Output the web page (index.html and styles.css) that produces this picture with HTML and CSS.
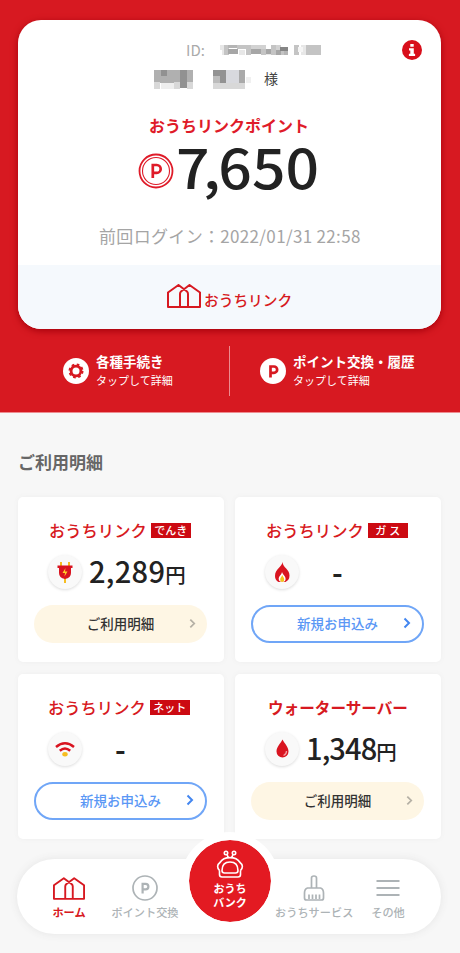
FILE: index.html
```html
<!DOCTYPE html>
<html lang="ja">
<head>
<meta charset="utf-8">
<title>おうちリンク</title>
<link rel="stylesheet" href="styles.css">
</head>
<body>
<svg class="defs" width="0" height="0">
  <symbol id="house" viewBox="0 0 34 24"><g fill="none" stroke="currentColor" stroke-width="2" stroke-linejoin="round"><path d="M1 23V8.500L11.500 1 20 7.500Q21 8.500 21 10V23ZM33 23V8.500L22.500 1 14 7.500Q13 8.500 13 10V23Z"/></g></symbol>
  <symbol id="chevron" viewBox="0 0 8 12"><path d="M1.500 1.500 6 6 1.500 10.500" fill="none" stroke="currentColor" stroke-width="2"/></symbol>
</svg>
<header class="hero">
  <section class="member">
    <div class="member-id"><span>ID:</span>
      <svg width="104" height="12" viewBox="0 0 104 12" shape-rendering="crispEdges">
        <path fill="#e7e7e7" d="M1 1h4v5H1zM3 6h3v5H3zM20 6h6v5h-6zM47 6h5v5h-5zM82 1h5v10h-5z"/>
        <path fill="#c4c4c4" d="M5 1h5v10H5zM18 1h9v4h-9zM27 1h5v10h-5zM42 5h5v6h-5zM52 1h5v10h-5zM61 6h5v5h-5zM75 1h5v10h-5zM87 1h15v10H87z"/>
        <path fill="#a6a6a6" d="M9 5h10v5H9zM32 5h10v5H32zM47 5h5v5h-5zM57 6h5v5h-5z"/>
        <path fill="#d2d2d2" d="M32 1h10v4H32zM42 1h5v4h-5zM57 1h5v5h-5z"/>
        <path fill="#858585" d="M61 3h8v4h-8z"/><path fill="#b5b5b5" d="M65 7h4v4h-4zM9 1h9v3H9z"/><path fill="#f5f5f5" d="M79 3h5v5h-5z"/>
      </svg>
    </div>
    <div class="member-name">
      <svg width="100" height="20" viewBox="0 0 100 20" shape-rendering="crispEdges">
        <path fill="#b0b0b0" d="M1 1h39v13H1z"/><path fill="#919191" d="M8 1h6v6H8zM27 1h7v18h-7z"/><path fill="#eee" d="M8 14h13v6H8z"/><path fill="#d8d8d8" d="M1 13h6v7H1zM21 13h6v7h-6zM34 13h6v7h-6z"/>
        <path fill="#929292" d="M60 1h13v13H60z"/><path fill="#bcbcbc" d="M60 7h7v7h-7z"/><path fill="#d8d9de" d="M73 1h13v13H73z"/><path fill="#aaa" d="M86 1h6v13h-6z"/><path fill="#d8d8d8" d="M60 14h32v6H60z"/><path fill="#f0f0f0" d="M93 8h5v6h-5z"/>
      </svg><span>様</span>
    </div>
    <button class="info" aria-label="情報"><svg width="20" height="20" viewBox="0 0 20 20"><circle cx="10" cy="10" r="10" fill="#d80f1b"/><path d="M8.300 4h3.400v2.800H8.300zM7 8.200h4.800v5.600h1.300V16H6.900v-2.200h1.400v-3.400H7z" fill="#fff"/></svg></button>
    <h1 class="point-title">おうちリンクポイント</h1>
    <div class="points">
      <svg width="36" height="36" viewBox="0 0 36 36" fill="none" stroke="#df1b29"><circle cx="18" cy="18" r="16.500" stroke-width="1.800"/><circle cx="18" cy="18" r="13.500" stroke-width="1.100"/><path d="M14.800 25V12h4a3.900 3.900 0 0 1 0 7.800h-4" stroke-width="2.700"/></svg>
      <strong>7<span>,</span>650</strong>
    </div>
    <p class="last-login">前回ログイン：2022/01/31 22:58</p>
    <footer class="member-brand"><svg width="34" height="24"><use href="#house" width="34" height="24"/></svg><span>おうちリンク</span></footer>
  </section>
  <nav class="actions">
    <a class="action"><svg width="26" height="26" viewBox="0 0 26 26"><circle cx="13" cy="13" r="13" fill="#fff"/><circle cx="13" cy="13" r="6.300" fill="#d71921"/><circle cx="13" cy="13" r="6.500" fill="none" stroke="#d71921" stroke-width="2" stroke-dasharray="2.600 2.505"/><circle cx="13" cy="13" r="3.500" fill="#fff"/></svg><span><b>各種手続き</b><small>タップして詳細</small></span></a>
    <a class="action action-exchange"><svg width="26" height="26" viewBox="0 0 26 26"><circle cx="13" cy="13" r="13" fill="#fff"/><path d="M10.500 19.500V8.500h3.500a3.100 3.100 0 0 1 0 6.300h-3.500" fill="none" stroke="#d71921" stroke-width="2.700"/></svg><span><b>ポイント交換・履歴</b><small>タップして詳細</small></span></a>
  </nav>
</header>
<main>
  <h2>ご利用明細</h2>
  <div class="cards">
    <article class="card">
      <h3><span class="brand">おうちリンク</span><em>でんき</em></h3>
      <div class="amount"><i><svg width="20" height="24" viewBox="0 0 20 24"><path d="M6 2v5M14 2v5M10 17v6" stroke="#f6bd20" stroke-width="2"/><path d="M2.500 5.500h15v2.500H16v5q0 5-6 6-6-1-6-6V8H2.500z" fill="#d91420"/><path d="M10.500 8 7.500 13H10l-.5 3.500 3-5H10z" fill="#ffd02a"/></svg></i><strong>2,289<small>円</small></strong></div>
      <a class="button">ご利用明細<svg width="7" height="11"><use href="#chevron" width="7" height="11"/></svg></a>
    </article>
    <article class="card">
      <h3><span class="brand">おうちリンク</span><em class="wide">ガス</em></h3>
      <div class="amount"><i><svg width="20" height="24" viewBox="0 0 20 24"><path d="M10.500 2C10 7 3 9 3 16q0 4 3.500 6h7q4-2 4-6.500C17.500 9 11 8 10.500 2z" fill="#d91420"/><path d="M10 12c1 3 3.600 4 3.600 7 0 2-1.200 3-3.300 3s-3.600-1-3.600-3c0-3 2.800-4 3.300-7z" fill="#fff"/><path d="M10.200 15c.8 1.700 2 2.600 2 4.300S11.500 22 10.200 22s-2-1-2-2.700 1.500-2.600 2-4.300z" fill="#f3c51b"/></svg></i><strong class="none">-</strong></div>
      <a class="button apply">新規お申込み<svg width="8" height="12"><use href="#chevron" width="8" height="12"/></svg></a>
    </article>
    <article class="card">
      <h3 class="net"><span class="brand">おうちリンク</span><em>ネット</em></h3>
      <div class="amount"><i><svg width="22" height="24" viewBox="0 0 22 24"><path d="M2 10q9-7.500 18 0M5.800 13.700q5.200-4.500 10.400 0" fill="none" stroke="#d91420" stroke-width="2.500"/><ellipse cx="11" cy="17.300" rx="2.700" ry="2.200" fill="#f6bd20"/></svg></i><strong class="none">-</strong></div>
      <a class="button apply">新規お申込み<svg width="8" height="12"><use href="#chevron" width="8" height="12"/></svg></a>
    </article>
    <article class="card">
      <h3 class="water">ウォーターサーバー</h3>
      <div class="amount water-amount"><i><svg width="20" height="24" viewBox="0 0 20 24"><path d="M10.500 2.500C8.500 6.500 4.500 10 4.500 14.500a6 6 0 0 0 12 0C16.500 10 12.500 6.500 10.500 2.500z" fill="#d91420"/><path d="M14.500 14q.2 3-3 4.500" fill="none" stroke="#f49ba0" stroke-width="1.300"/></svg></i><strong>1,348<small>円</small></strong></div>
      <a class="button">ご利用明細<svg width="7" height="11"><use href="#chevron" width="7" height="11"/></svg></a>
    </article>
  </div>
</main>
<nav class="tabs">
  <a class="tab current"><svg width="32" height="23"><use href="#house" width="32" height="23"/></svg><span>ホーム</span></a>
  <a class="tab"><svg width="26" height="26" viewBox="0 0 26 26" fill="none" stroke="currentColor"><circle cx="13" cy="13" r="12" stroke-width="1.700"/><path d="M10.600 18.500V8.800h3a2.800 2.800 0 0 1 0 5.600h-3" stroke-width="2.200"/></svg><span>ポイント交換</span></a>
  <div class="gap"></div>
  <a class="tab"><svg width="22" height="26" viewBox="0 0 22 26" fill="none" stroke="currentColor" stroke-width="1.700"><path d="M8.500 13V3q0-2 2.500-2t2.500 2v10M4.500 13h13q3 1 3 5v5q0 2-2 2h-15q-2 0-2-2v-5q0-4 3-5zM6 24v-4.500M9.500 24v-4.500M13 24v-4.500M16.500 24v-4.500"/></svg><span>おうちサービス</span></a>
  <a class="tab"><svg width="24" height="18" viewBox="0 0 24 18" stroke="currentColor" stroke-width="2"><path d="M.5 2h23M.5 9h23M.5 16h23"/></svg><span>その他</span></a>
  <a class="bank"><svg width="28" height="29" viewBox="0 0 28 29" fill="none" stroke="#fff" stroke-width="1.600"><circle cx="10" cy="3" r="1.700"/><circle cx="18" cy="3" r="1.700"/><path d="M11 4.500 12.500 8M17 4.500 15.500 8M3.500 20.500Q-.5 16 4 12.500C8 6 20 6 24 12.500q4.500 3.500.5 8M3.500 20.500v4Q3.500 27 6 27h16q2.500 0 2.500-2.500v-4M6 20.500Q6 12 14 12t8 8.500q0 2.500-2.500 2.500h-11Q6 23 6 20.500z"/></svg><span class="bank-line">おうち</span><span>バンク</span></a>
</nav>
</body>
</html>
```

FILE: styles.css
```css
* { box-sizing: border-box; }
body { margin: 0; height: 953px; overflow: hidden; background: #f7f7f7; color: #222; font-family: "Noto Sans CJK JP", sans-serif; }
svg { display: block; flex: none; }
.defs { position: absolute; }
h1, h2, h3, p { margin: 0; }
b, small, em, i { font-style: normal; }

.hero { height: 413px; padding: 20px 19px 0 18px; background: #d71921; border-bottom: 1px solid #ee8c90; }
.member { position: relative; height: 309px; border-radius: 23px; background: #fff; overflow: hidden; box-shadow: 0 2px 7px #a5000c; padding-top: 20px; display: flex; flex-direction: column; }
.member-id { display: flex; align-items: center; height: 20px; padding-left: 168px; gap: 14px; color: #aaa; font-size: 15px; line-height: 20px; }
.member-name { display: flex; align-items: center; height: 20px; margin-top: 9px; padding-left: 135px; gap: 11px; color: #444; font-size: 14px; line-height: 18px; }
.member-name span { margin-top: -2px; }
.info { position: absolute; right: 19px; top: 20px; padding: 0; border: 0; background: none; }
.point-title { margin-top: 25px; height: 22px; line-height: 22px; padding-right: 1px; text-align: center; color: #df1b29; font-size: 16px; font-weight: 700; }
.points { display: flex; align-items: center; height: 60px; margin-top: 3px; padding-left: 120px; gap: 2px; }
.points svg { margin-top: 4px; }
.points strong { font: 500 54px/54px "Noto Sans CJK JP", sans-serif; margin-top: -7px; color: #222; transform: scaleX(1.09); transform-origin: left; }
.points strong span { margin: 0 -2px 0 -6px; }
.last-login { margin-top: 24px; height: 26px; line-height: 26px; padding-left: 81px; color: #a5a5a5; font-size: 17px; letter-spacing: .33px; white-space: nowrap; }
.member-brand { display: flex; align-items: center; gap: 3px; height: 64px; margin-top: auto; padding-left: 149px; background: #f5f9fd; color: #d71921; }
.member-brand svg { margin-bottom: 2px; }
.member-brand span { font-size: 14.700px; font-weight: 500; line-height: 20px; margin-top: 5px; }

.actions { display: flex; height: 50px; margin: 17px -19px 0 -18px; color: #fff; }
.action { display: flex; align-items: center; gap: 7px; width: 230px; padding-left: 63px; border-right: 1px solid #ed8b8f; }
.action-exchange { padding-left: 30px; border: 0; }
.action span { display: grid; margin-top: -2px; }
.action b { font-size: 13.500px; line-height: 19px; font-weight: 700; white-space: nowrap; }
.action small { font-size: 11px; line-height: 18px; }

main { padding: 0 19px 0 18px; }
h2 { height: 84px; padding-top: 36px; line-height: 25px; font-size: 17px; font-weight: 700; color: #666; }
.cards { display: grid; grid-template-columns: 206px 206px; gap: 12px 11px; }
.card { height: 165px; padding: 21px 17px 0 16px; border-radius: 5px; background: #fff; box-shadow: 0 0 5px #eee; }
h3 { display: flex; align-items: center; height: 24px; padding-left: 15px; color: #d71921; font-size: 16.300px; font-weight: 500; white-space: nowrap; }
h3.net { padding-left: 14px; }
h3 em { width: 40px; height: 15px; margin-left: 4px; background: #cc0a12; color: #fff; font-size: 11px; line-height: 15px; text-align: center; }
.wide { letter-spacing: 3px; text-indent: 3px; }
h3.water { padding-left: 17px; font-size: 15.600px; font-weight: 700; }
.amount { display: flex; align-items: center; height: 36px; margin-top: 12px; padding-left: 14px; gap: 7px; }
.amount i { display: grid; place-items: center; width: 34px; height: 34px; border-radius: 50%; background: #f9f9f9; box-shadow: 0 1px 3px #ddd; }
.amount strong { font: 500 29px/34px "Noto Sans CJK JP", sans-serif; letter-spacing: .3px; white-space: nowrap; }
.amount small { font-size: 20.500px; letter-spacing: 0; }
.water-amount strong { letter-spacing: -.9px; }
.amount .none { padding-left: 26px; margin-top: -2px; font-weight: 700; }
.button { position: relative; display: flex; align-items: center; justify-content: center; height: 38px; width: 173px; margin-top: 15px; border-radius: 19px; background: #fef6e4; color: #333; font-size: 13.500px; font-weight: 500; line-height: 20px; padding-bottom: 2px; }
.button svg { position: absolute; right: 11px; color: #b5b0a5; }
.apply { border: 2px solid #70a6f7; background: #fff; color: #5a97f5; }
.apply svg { color: #4386f0; }

.tabs { position: relative; display: flex; width: 424px; height: 75px; margin: 20px 0 0 17px; border-radius: 38px; background: #fff; color: #adb3b6; box-shadow: 0 0 8px #e5e5e5; }
.tab { display: grid; grid-template-rows: 28px 20px; place-items: center; align-content: start; padding-top: 15px; width: 76px; font-size: 11.200px; font-weight: 500; line-height: 20px; white-space: nowrap; }
.tab:first-child { margin-left: 14px; }
.tab.current { color: #d71921; font-weight: 700; }
.gap { width: 92px; }
.tab:nth-of-type(4) { width: 74px; }
.bank { position: absolute; left: 164px; top: -27px; width: 98px; height: 98px; border: 8px solid #fff; border-radius: 50%; background: #e31a22; background-clip: padding-box; display: flex; flex-direction: column; align-items: center; padding-top: 10px; color: #fff; font-size: 11px; font-weight: 700; line-height: 14px; text-align: center; }
.bank-line { margin-top: 2px; }
```
